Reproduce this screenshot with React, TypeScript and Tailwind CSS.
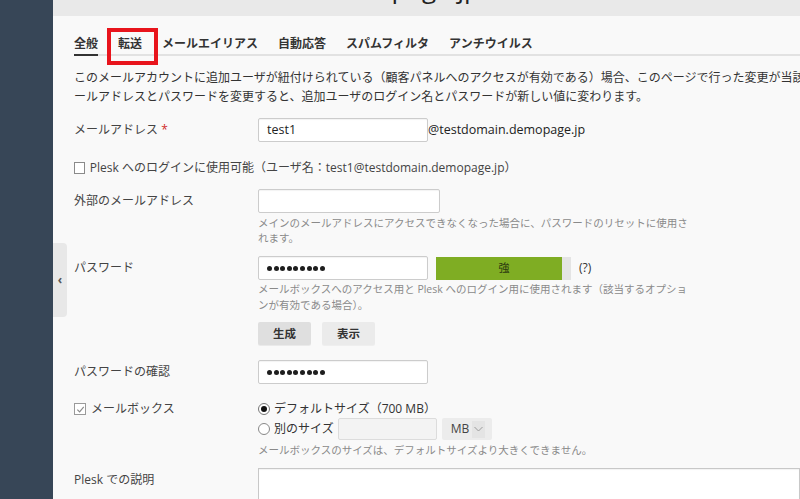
import React from "react";

const FONT = { fontFamily: '"Open Sans", "Noto Sans CJK JP", sans-serif' };

function Dots() {
  return (
    <div className="flex items-center gap-[1.6px]">
      {Array.from({ length: 9 }).map((_, i) => (
        <span key={i} className="block h-[5px] w-[5px] rounded-full bg-[#1e1e1e]" />
      ))}
    </div>
  );
}

function Input({ w, children, disabled }: { w: string; children?: React.ReactNode; disabled?: boolean }) {
  return (
    <div
      className={`${w} h-[24px] flex items-center px-[8px] rounded-[2px] border ${
        disabled ? "border-[#dcdcdc] bg-[#f3f3f3]" : "border-[#cccccc] bg-white shadow-[inset_0_1px_1px_rgba(0,0,0,0.05)]"
      } text-[12.5px] text-[#222]`}
    >
      {children}
    </div>
  );
}

function Label({ children }: { children: React.ReactNode }) {
  return <div className="w-[184px] shrink-0 text-[12px] text-[#444] leading-[24px]">{children}</div>;
}

export default function App() {
  return (
    <div className="flex h-[499px] w-[800px] overflow-hidden bg-[#f9f9f9]" style={FONT}>
      <div className="w-[53px] shrink-0 bg-[#374657]" />
      <div className="relative flex-1 overflow-hidden">
        {/* header band with the page title scrolled almost out of view */}
        <div className="h-[16px] overflow-hidden bg-[#e9e9e9]">
          <div className="-mt-[27px] flex w-[427px] justify-end">
            <div className="whitespace-nowrap text-[26px] leading-[30px] text-[#222]">
              test1@testdomain.demopage.jp
            </div>
          </div>
        </div>

        {/* side toggle */}
        <div className="absolute left-0 top-[243px] flex h-[74px] w-[14px] items-center justify-center rounded-r-[4px] bg-[#e8e8e8] text-[12px] font-bold text-[#555]">
          ‹
        </div>

        {/* red annotation box */}
        <div className="absolute left-[54px] top-[28px] h-[37px] w-[51px] border-[4px] border-[#e8141c]" />

        <div className="pl-[21px]">
          {/* tabs */}
          <div className="mt-[20px] flex gap-[20px] border-b-2 border-[#e2e2e2] text-[12px] font-bold text-[#333] leading-[16px]">
            <div className="-mb-[2px] border-b-2 border-[#333] pb-[2px]">全般</div>
            <div className="pb-[2px]">転送</div>
            <div className="pb-[2px]">メールエイリアス</div>
            <div className="pb-[2px]">自動応答</div>
            <div className="pb-[2px]">スパムフィルタ</div>
            <div className="pb-[2px]">アンチウイルス</div>
          </div>

          {/* description */}
          <div className="mt-[12px] whitespace-nowrap text-[12px] leading-[19px] text-[#333]">
            <div>このメールアカウントに追加ユーザが紐付けられている（顧客パネルへのアクセスが有効である）場合、このページで行った変更が当該ユーザにも適用されます。メ</div>
            <div>ールアドレスとパスワードを変更すると、追加ユーザのログイン名とパスワードが新しい値に変わります。</div>
          </div>

          {/* row: mail address */}
          <div className="mt-[12px] flex items-center">
            <Label>
              メールアドレス <span className="text-[#d02b2b]">*</span>
            </Label>
            <Input w="w-[170px]">test1</Input>
            <span className="text-[12.5px] text-[#222]">@testdomain.demopage.jp</span>
          </div>

          {/* row: plesk login */}
          <div className="mt-[18px] flex items-center leading-[16px] text-[12px] text-[#444] whitespace-nowrap">
            <div className="flex w-[180px] shrink-0 items-center">
              <span className="mr-[5px] block h-[12px] w-[12px] border border-[#8a8a8a] bg-white" />
              <span>Plesk へのログインに使用可能</span>
            </div>
            <span>（ユーザ名：test1@testdomain.demopage.jp）</span>
          </div>

          {/* row: external mail */}
          <div className="mt-[13px] flex items-start">
            <Label>外部のメールアドレス</Label>
            <div>
              <Input w="w-[182px]" />
              <div className="mt-[3px] whitespace-nowrap text-[10.5px] leading-[15px] text-[#8a8a8a]">
                <div>メインのメールアドレスにアクセスできなくなった場合に、パスワードのリセットに使用さ</div>
                <div>れます。</div>
              </div>
            </div>
          </div>

          {/* row: password */}
          <div className="mt-[10px] flex items-start">
            <Label>パスワード</Label>
            <div>
              <div className="flex items-center">
                <Input w="w-[170px]">
                  <Dots />
                </Input>
                <div className="ml-[8px] flex h-[23px] w-[135px]">
                  <div className="flex w-[126px] items-center justify-center bg-[#7fad23] text-[11px] text-[#2c3a10]">
                    <span className="ml-[10px]">強</span>
                  </div>
                  <div className="w-[9px] bg-[#e4e4e4]" />
                </div>
                <span className="ml-[8px] text-[12px] text-[#333]">(?)</span>
              </div>
              <div className="mt-[1px] whitespace-nowrap text-[10.5px] leading-[16px] text-[#8a8a8a]">
                <div>メールボックスへのアクセス用と Plesk へのログイン用に使用されます（該当するオプショ</div>
                <div>ンが有効である場合）。</div>
              </div>
              <div className="mt-[9px] flex gap-[11px] text-[11.5px] font-bold text-[#333]">
                <div className="flex h-[23px] w-[53px] items-center justify-center rounded-[2px] bg-[#dfdfdf] shadow-[0_1px_0_rgba(0,0,0,0.06)]">
                  生成
                </div>
                <div className="flex h-[23px] w-[53px] items-center justify-center rounded-[2px] bg-[#ebebeb] shadow-[0_1px_0_rgba(0,0,0,0.04)]">
                  表示
                </div>
              </div>
            </div>
          </div>

          {/* row: confirm */}
          <div className="mt-[15px] flex items-center">
            <Label>パスワードの確認</Label>
            <Input w="w-[170px]">
              <Dots />
            </Input>
          </div>

          {/* row: mailbox */}
          <div className="mt-[15px] flex items-start">
            <div className="flex w-[184px] shrink-0 items-center text-[12px] leading-[20px] text-[#444]">
              <span className="mr-[5px] flex h-[12px] w-[12px] items-center justify-center border border-[#9a9a9a] bg-white">
                <svg width="9" height="9" viewBox="0 0 10 10">
                  <path d="M1.5 5.2 L4 7.6 L8.6 2.2" fill="none" stroke="#8a8a8a" strokeWidth="1.3" />
                </svg>
              </span>
              メールボックス
            </div>
            <div className="text-[12px] text-[#333]">
              <div className="flex h-[19px] items-center">
                <span className="mr-[4px] flex h-[12px] w-[12px] items-center justify-center rounded-full border border-[#777] bg-white">
                  <span className="block h-[6px] w-[6px] rounded-full bg-[#111]" />
                </span>
                デフォルトサイズ（700 MB）
              </div>
              <div className="flex items-center">
                <span className="mr-[4px] block h-[12px] w-[12px] rounded-full border border-[#888] bg-white" />
                <span>別のサイズ</span>
                <div className="ml-[4px] h-[22px] w-[99px] rounded-[2px] border border-[#dcdcdc] bg-[#f3f3f3]" />
                <div className="ml-[5px] flex h-[22px] w-[50px] items-center rounded-[2px] bg-[#ececec] pl-[9px]">
                  <span className="text-[12px] text-[#444]">MB</span>
                  <span className="ml-[3px] flex h-[17px] w-[13px] items-center justify-center bg-[#e4e4e4]">
                    <svg width="9" height="6" viewBox="0 0 9 6">
                      <path d="M0.5 1 L4.5 5 L8.5 1" fill="none" stroke="#9a9a9a" strokeWidth="1" />
                    </svg>
                  </span>
                </div>
              </div>
              <div className="mt-[3px] whitespace-nowrap text-[10.5px] leading-[15px] text-[#8a8a8a]">
                メールボックスのサイズは、デフォルトサイズより大きくできません。
              </div>
            </div>
          </div>

          {/* row: description */}
          <div className="mt-[10px] flex items-start">
            <div className="w-[184px] shrink-0 pt-[4px] text-[12px] leading-[16px] text-[#444]">Plesk での説明</div>
            <div className="h-[60px] w-[600px] border border-[#c8c8c8] bg-white shadow-[inset_0_1px_1px_rgba(0,0,0,0.05)]" />
          </div>
        </div>
      </div>
    </div>
  );
}
